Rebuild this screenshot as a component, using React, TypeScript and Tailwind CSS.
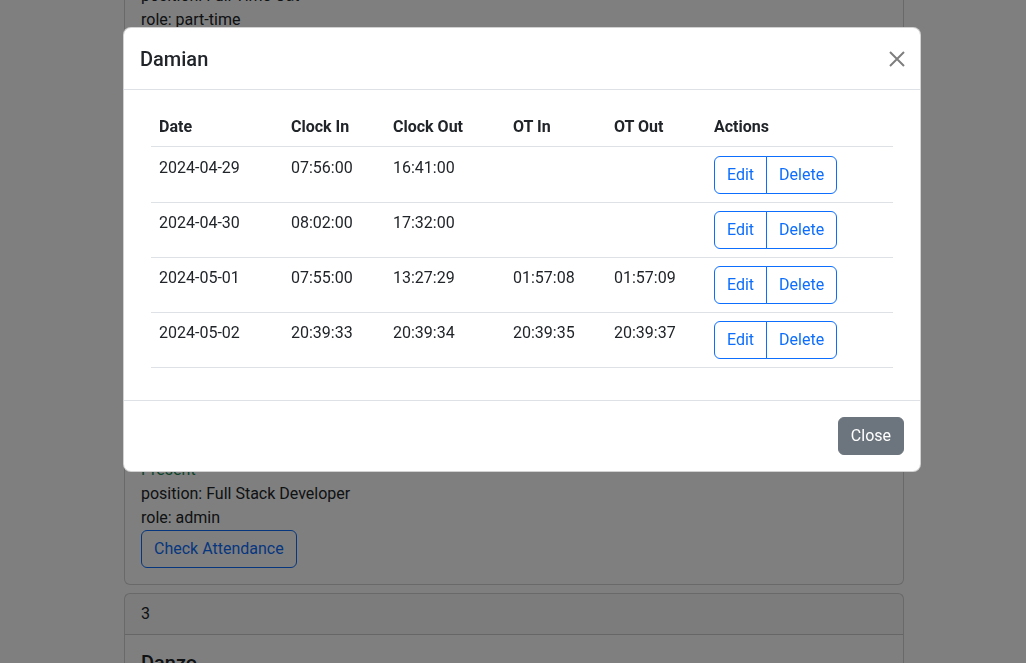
import React from 'react'

type Row = {
  date: string
  clockIn: string
  clockOut: string
  otIn: string
  otOut: string
}

const rows: Row[] = [
  { date: '2024-04-29', clockIn: '07:56:00', clockOut: '16:41:00', otIn: '', otOut: '' },
  { date: '2024-04-30', clockIn: '08:02:00', clockOut: '17:32:00', otIn: '', otOut: '' },
  { date: '2024-05-01', clockIn: '07:55:00', clockOut: '13:27:29', otIn: '01:57:08', otOut: '01:57:09' },
  { date: '2024-05-02', clockIn: '20:39:33', clockOut: '20:39:34', otIn: '20:39:35', otOut: '20:39:37' },
]

function EmployeeCard({
  id,
  name,
  position,
  role,
  children,
}: {
  id: number
  name: string
  position: string
  role: string
  children?: React.ReactNode
}) {
  return (
    <div className="mb-2 rounded-md border border-black/[0.175] bg-white">
      <div className="border-b border-black/[0.175] bg-[#212529]/[0.03] px-4 py-2">{id}</div>
      <div className="p-4">
        <h5 className="mb-2 text-[20px] font-medium leading-[24px]">{name}</h5>
        {children}
        <div className="text-[#198754]">Present</div>
        <div>position: {position}</div>
        <div>role: {role}</div>
        <button className="rounded-md border border-[#0d6efd] px-3 py-[6px] text-[#0d6efd]">Check Attendance</button>
      </div>
    </div>
  )
}

export default function App() {
  return (
    <div className="relative h-[663px] overflow-hidden bg-white font-['Segoe_UI',Roboto,'Liberation_Sans',sans-serif] text-base leading-6 text-[#212529]">
      {/* page behind the modal */}
      <div className="ml-[124px] mt-[-130px] w-[780px]">
        <EmployeeCard id={1} name="Mochi" position="Full Time Cat" role="part-time" />
        <EmployeeCard id={2} name="Damian" position="Full Stack Developer" role="admin">
          <div className="h-[273px]" />
        </EmployeeCard>
        <EmployeeCard id={3} name="Danzo" position="Designer" role="staff" />
      </div>

      {/* backdrop */}
      <div className="fixed inset-0 bg-black/50" />

      {/* modal */}
      <div className="fixed inset-0">
        <div className="ml-[123px] mt-[27px] w-[798px] rounded-lg border border-black/[0.175] bg-white">
          <div className="flex items-center border-b border-[#dee2e6] px-4 pb-[15px] pt-[17px]">
            <h4 className="text-[20px] font-medium leading-[29px]">Damian</h4>
            <button className="ml-auto mr-[-1px] mt-[-2px] flex h-4 w-4 items-center justify-center opacity-50">
              <svg viewBox="0 0 16 16" width="16" height="16">
                <path d="M1 1L15 15M15 1L1 15" stroke="#000" strokeWidth="2" fill="none" />
              </svg>
            </button>
          </div>

          <div className="p-4">
            <div className="px-[11px]">
              <table className="mb-4 w-full table-fixed border-collapse text-left">
                <thead>
                  <tr className="border-b border-[#dee2e6]">
                    <th className="w-[132px] px-2 pb-[7px] pt-[9px] font-bold">Date</th>
                    <th className="w-[102px] px-2 pb-[7px] pt-[9px] font-bold">Clock In</th>
                    <th className="w-[120px] px-2 pb-[7px] pt-[9px] font-bold">Clock Out</th>
                    <th className="w-[101px] px-2 pb-[7px] pt-[9px] font-bold">OT In</th>
                    <th className="w-[100px] px-2 pb-[7px] pt-[9px] font-bold">OT Out</th>
                    <th className="px-2 pb-[7px] pt-[9px] font-bold">Actions</th>
                  </tr>
                </thead>
                <tbody>
                  {rows.map((r, i) => (
                    <tr key={r.date} className="border-b border-[#dee2e6] align-top">
                      <td className={i === 0 ? 'px-2 pb-2 pt-[9px]' : 'p-2'}>{r.date}</td>
                      <td className={i === 0 ? 'px-2 pb-2 pt-[9px]' : 'p-2'}>{r.clockIn}</td>
                      <td className={i === 0 ? 'px-2 pb-2 pt-[9px]' : 'p-2'}>{r.clockOut}</td>
                      <td className={i === 0 ? 'px-2 pb-2 pt-[9px]' : 'p-2'}>{r.otIn}</td>
                      <td className={i === 0 ? 'px-2 pb-2 pt-[9px]' : 'p-2'}>{r.otOut}</td>
                      <td className={i === 0 ? 'px-2 pb-2 pt-[9px]' : 'p-2'}>
                        <div className="inline-flex">
                          <button className="rounded-l-md border border-[#0d6efd] px-3 py-[6px] text-[#0d6efd]">Edit</button>
                          <button className="-ml-px rounded-r-md border border-[#0d6efd] px-3 py-[6px] text-[#0d6efd]">Delete</button>
                        </div>
                      </td>
                    </tr>
                  ))}
                </tbody>
              </table>
            </div>
          </div>

          <div className="flex justify-end border-t border-[#dee2e6] p-3">
            <button className="m-1 rounded-md border border-[#6c757d] bg-[#6c757d] px-3 py-[6px] text-white">Close</button>
          </div>
        </div>
      </div>
    </div>
  )
}
